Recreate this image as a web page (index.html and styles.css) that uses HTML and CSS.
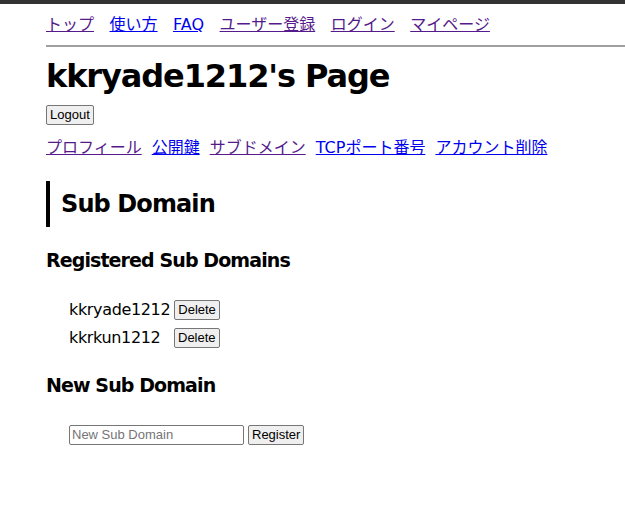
FILE: index.html
```html
<!DOCTYPE html>
<html>
<head>
    <title>kkryade1212's Page</title>
    <meta charset="UTF-8">
    <link rel="stylesheet" href="styles.css">
</head>
<body>
    <!-- Global Nav -->
    <nav class="global-nav">
        <a href="#" class="seen">トップ</a>
        <a href="#">使い方</a>
        <a href="#">FAQ</a>
        <a href="#" class="seen">ユーザー登録</a>
        <a href="#" class="seen">ログイン</a>
        <a href="#" class="seen">マイページ</a>
    </nav>

    <div class="page">
        <h1>kkryade1212's Page</h1>
        <button class="logout">Logout</button>

        <!-- Account Nav -->
        <nav class="account-nav">
            <a href="#" class="seen">プロフィール</a>
            <a href="#">公開鍵</a>
            <a href="#" class="seen">サブドメイン</a>
            <a href="#">TCPポート番号</a>
            <a href="#">アカウント削除</a>
        </nav>

        <h2>Sub Domain</h2>

        <h3>Registered Sub Domains</h3>
        <ul class="domain-list">
            <li><span class="domain-name">kkryade1212</span> <button>Delete</button></li>
            <li><span class="domain-name">kkrkun1212</span> <button>Delete</button></li>
        </ul>

        <h3>New Sub Domain</h3>
        <form class="new-domain">
            <input type="text" placeholder="New Sub Domain">
            <button type="button">Register</button>
        </form>
    </div>
</body>
</html>
```

FILE: styles.css
```css
body {
    margin: 0;
    padding: 0;
    border-top: 4px solid #333;
    font-family: "DejaVu Sans", "Noto Sans CJK JP", sans-serif;
    font-size: 16px;
    color: #000;
    background: #fff;
}
a {
    color: #0000ee;
}
a.seen {
    color: #551a8b;
}

/* --- Global Nav --- */
.global-nav {
    margin-left: 46px;
    padding: 10px 0 9px;
    border-bottom: 2px solid #a0a0a0;
    display: flex;
    gap: 15.5px;
    line-height: 22px;
}

/* --- Page Body --- */
.page {
    padding: 0 46px;
}
h1 {
    margin: 7px 0 6px;
    font-size: 32px;
    line-height: 44px;
    font-weight: bold;
    letter-spacing: -1.1px;
}
button {
    font-family: "Liberation Sans", Arial, sans-serif;
    font-size: 13px;
    height: 20px;
    padding: 1px 3px;
    border: 1px solid #767676;
    border-radius: 2px;
    background-color: #efefef;
    color: #000;
}
.account-nav {
    margin: 12px 0 0;
    display: flex;
    gap: 10px;
    line-height: 22px;
}
h2 {
    margin: 22px 0 0;
    padding: 2px 0 2px 11px;
    border-left: 4px solid #000;
    font-size: 24px;
    line-height: 42px;
    letter-spacing: -0.9px;
}
h3 {
    margin: 20px 0 0;
    font-size: 19px;
    line-height: 26px;
    letter-spacing: -0.9px;
}
.domain-list {
    list-style: none;
    margin: 23px 0 1px;
    padding: 0 0 0 23px;
}
.domain-list li {
    line-height: 28px;
    display: flex;
    align-items: center;
    gap: 4px;
}
.domain-name {
    min-width: 101px;
    letter-spacing: -0.35px;
}
.new-domain {
    margin: 27px 0 0 23px;
    display: flex;
    gap: 4px;
    align-items: center;
}
.new-domain input {
    width: 175px;
    height: 20px;
    box-sizing: border-box;
    padding: 1px 2px;
    border: 1px solid #767676;
    border-radius: 2px;
    font-family: "Liberation Sans", Arial, sans-serif;
    font-size: 13px;
}
.new-domain input::placeholder {
    color: #757575;
}
```
